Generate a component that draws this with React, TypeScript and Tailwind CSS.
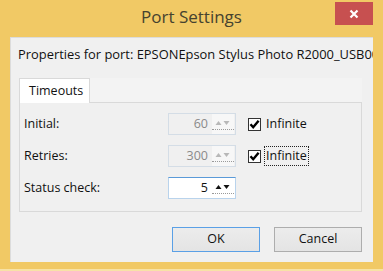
import React from "react";

const font = { fontFamily: '"Open Sans", "Noto Sans", sans-serif' };

function SpinBox({ value, disabled }: { value: string; disabled?: boolean }) {
  return (
    <div
      className={`flex h-[22px] w-[68px] items-stretch border ${
        disabled
          ? "border-[#d4dde6] bg-[#f0f0f0] text-[#8a8a8a]"
          : "border-[#b9d3ec] border-t-[#5a9ad8] bg-white text-[#111]"
      }`}
    >
      <div className="flex flex-1 items-center justify-end pr-[4px] text-[12.5px] leading-none">{value}</div>
      <div className={`relative mr-[1px] w-[22px] ${disabled ? "bg-[#f7f7f7]" : "bg-white"}`}>
        <svg className="absolute left-[3px] top-[6px]" width="15" height="6" viewBox="0 0 15 6">
          <path d="M0.5 5 L3.5 1 L6.5 5 Z" fill={disabled ? "#b8b8b8" : "#111"} />
          <path d="M8.5 1 L14.5 1 L11.5 5 Z" fill={disabled ? "#b8b8b8" : "#111"} />
        </svg>
        <div className="absolute bottom-[4px] left-0 right-0 border-b border-dotted border-[#9a9a9a]" />
      </div>
    </div>
  );
}

function Check({ focused }: { focused?: boolean }) {
  return (
    <label className="flex items-center gap-[4px]">
      <span className="flex h-[13px] w-[13px] items-center justify-center border border-[#333] bg-white">
        <svg width="11" height="11" viewBox="0 0 11 11">
          <path d="M1.5 5.2 L4.2 8.2 L9.6 1.8" fill="none" stroke="#000" strokeWidth="2.4" />
        </svg>
      </span>
      <span
        className={`px-[1px] text-[12.5px] leading-[18px] text-[#111] ${
          focused ? "outline outline-1 outline-dotted outline-[#222]" : ""
        }`}
      >
        Infinite
      </span>
    </label>
  );
}

function Row({ label, children }: { label: string; children: React.ReactNode }) {
  return (
    <div className="flex h-[22px] items-center">
      <div className="w-[144px] text-[12.5px] text-[#111]">{label}</div>
      {children}
    </div>
  );
}

export default function App() {
  return (
    <div
      className="flex h-[271px] w-[383px] flex-col border-b-2 border-[#f7e2a6] bg-[#f1c965] px-[10px] pb-[7px]"
      style={font}
    >
      {/* Title bar */}
      <div className="relative h-[37px] pt-[5px] text-center">
        <span className="text-[17px] leading-[24px] text-[#45422f]">Port Settings</span>
        <div className="absolute right-0 top-[2px] flex h-[23px] w-[38px] items-center justify-center bg-[#c75050]">
          <svg width="10" height="10" viewBox="0 0 10 10">
            <path d="M1.5 1.5 L8.5 8.5 M8.5 1.5 L1.5 8.5" stroke="#fff" strokeWidth="2.2" />
          </svg>
        </div>
      </div>

      {/* Dialog body */}
      <div className="flex flex-1 flex-col overflow-hidden border-l border-t border-[#dcdcdc] bg-[#f0f0f0] pl-[8px] pr-[11px]">
        <div className="-ml-[1px] mt-[7px] whitespace-nowrap text-[12.9px] leading-[18px] text-[#111]">
          Properties for port: EPSONEpson Stylus Photo R2000_USB001
        </div>

        <div className="mt-[15px] flex">
          <div className="relative z-10 -mb-[1px] h-[25px] w-[71px] border border-b-0 border-[#d9d9d9] bg-white pl-[9px] pt-[3px] text-[12.5px] leading-[18px] text-[#111]">
            Timeouts
          </div>
          <div className="flex-1 bg-[#f3f3f3]" />
        </div>

        <div className="flex h-[110px] flex-col gap-[10px] border border-[#d9d9d9] bg-[#f0f0f0] pl-[4px] pt-[10px]">
          <Row label="Initial:">
            <SpinBox value="60" disabled />
            <div className="ml-[12px]">
              <Check />
            </div>
          </Row>
          <Row label="Retries:">
            <SpinBox value="300" disabled />
            <div className="ml-[12px]">
              <Check focused />
            </div>
          </Row>
          <Row label="Status check:">
            <SpinBox value="5" />
          </Row>
        </div>

        <div className="mt-[15px] flex justify-end gap-[14px]">
          <button className="h-[25px] w-[88px] border border-[#5aa0e6] bg-gradient-to-b from-[#ececec] to-[#e4e4e4] text-[12.5px] text-[#111]">
            OK
          </button>
          <button className="h-[25px] w-[88px] border border-[#adadad] bg-gradient-to-b from-[#ececec] to-[#e4e4e4] text-[12.5px] text-[#111]">
            Cancel
          </button>
        </div>
      </div>
    </div>
  );
}
